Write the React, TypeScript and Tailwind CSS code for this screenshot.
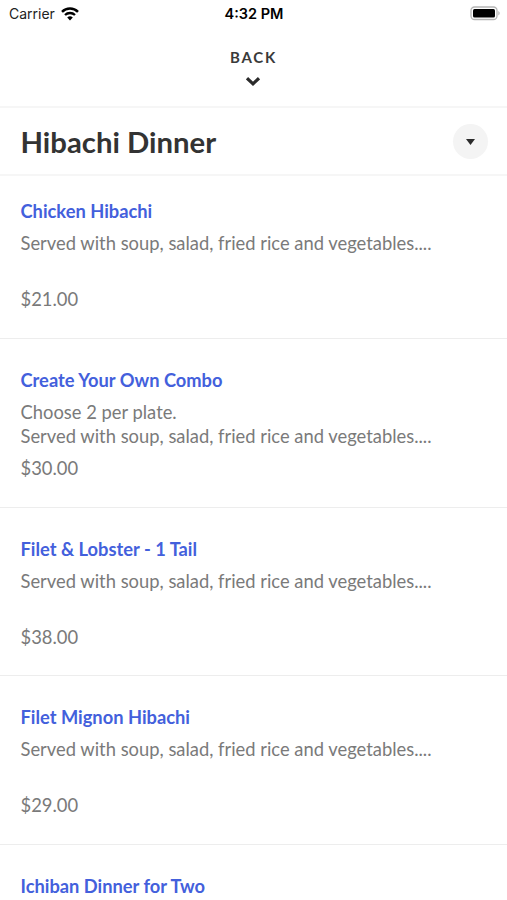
interface MenuItem {
  name: string;
  description?: string[];
  price?: string;
}

const items: MenuItem[] = [
  {
    name: "Chicken Hibachi",
    description: ["Served with soup, salad, fried rice and vegetables...."],
    price: "$21.00",
  },
  {
    name: "Create Your Own Combo",
    description: [
      "Choose 2 per plate.",
      "Served with soup, salad, fried rice and vegetables....",
    ],
    price: "$30.00",
  },
  {
    name: "Filet & Lobster - 1 Tail",
    description: ["Served with soup, salad, fried rice and vegetables...."],
    price: "$38.00",
  },
  {
    name: "Filet Mignon Hibachi",
    description: ["Served with soup, salad, fried rice and vegetables...."],
    price: "$29.00",
  },
  {
    name: "Ichiban Dinner for Two",
  },
];

export default function App() {
  return (
    <div className="flex h-[900px] w-full flex-col overflow-hidden bg-white font-['Lato',sans-serif]">
      <StatusBar />
      <BackButton />
      <header className="flex h-[70px] shrink-0 items-center justify-between border-y-2 border-[#f6f6f6] pr-[19px] pl-[20.5px]">
        <h1 className="pt-0.5 text-[29.3px] font-bold text-[#333]">Hibachi Dinner</h1>
        <button className="flex size-[35px] items-center justify-center rounded-full bg-[#f4f4f4] text-[#2b2b2b]">
          <svg className="mt-px" width="9" height="6" viewBox="0 0 9 6" fill="currentColor">
            <path d="M0 0h9L4.5 6z" />
          </svg>
        </button>
      </header>
      <main>
        {items.map((item) => (
          <MenuRow key={item.name} item={item} />
        ))}
      </main>
    </div>
  );
}

function StatusBar() {
  return (
    <div className="grid h-[27px] shrink-0 grid-cols-3 items-center pr-[7px] pl-[9px] font-['Inter',sans-serif] text-sm text-black">
      <div className="flex items-center gap-1.5">
        <span className="text-[#222]">Carrier</span>
        <svg width="18" height="14" viewBox="0 0 18 14" fill="none">
          <path d="M1 4.8a11.4 11.4 0 0 1 16 0" stroke="currentColor" strokeWidth="2.5" />
          <path d="M4 8a7.2 7.2 0 0 1 10 0" stroke="currentColor" strokeWidth="2.3" />
          <path d="M6.2 10.5a4.1 4.1 0 0 1 5.6 0L9 13.5z" fill="currentColor" />
        </svg>
      </div>
      <span className="-ml-px pt-0.5 text-center text-[14.5px] font-semibold">4:32 PM</span>
      <svg className="justify-self-end" width="30" height="15" viewBox="0 0 30 15">
        <rect x="1" y="1" width="26" height="12.5" rx="3.5" fill="none" stroke="#b5b5b5" strokeWidth="1.3" />
        <rect x="3" y="3" width="22" height="8.5" rx="1.5" />
        <path d="M28.3 5v4.5c1.8-.8 1.8-3.7 0-4.5z" fill="#b5b5b5" />
      </svg>
    </div>
  );
}

function BackButton() {
  return (
    <button className="flex h-[79px] shrink-0 flex-col items-center pt-5 pr-px text-[15px] leading-5 font-bold tracking-[1.8px] text-[#3a3a3a]">
      <span className="-mr-px">BACK</span>
      <svg className="mt-2.5" width="14" height="9" viewBox="0 0 14 9" fill="none">
        <path d="M1 1.2l6 5.6 6-5.6" stroke="#2b2b2b" strokeWidth="3.2" />
      </svg>
    </button>
  );
}

function MenuRow({ item }: { item: MenuItem }) {
  return (
    <article className="h-[168.5px] border-b border-[#ededed] px-[20.5px] pt-[29px] text-[18.38px] text-[#7a7a7a] first:h-[163px] first:pt-[23px] last:h-auto last:border-b-0">
      <h2 className="text-[18.3px] leading-[25px] font-bold text-[#4360dc]">{item.name}</h2>
      {item.description && (
        <div className="mt-[7px] h-[49px] leading-6">
          {item.description.map((line) => (
            <p key={line}>{line}</p>
          ))}
        </div>
      )}
      {item.price && <p className="mt-[7px] leading-[25px]">{item.price}</p>}
    </article>
  );
}
